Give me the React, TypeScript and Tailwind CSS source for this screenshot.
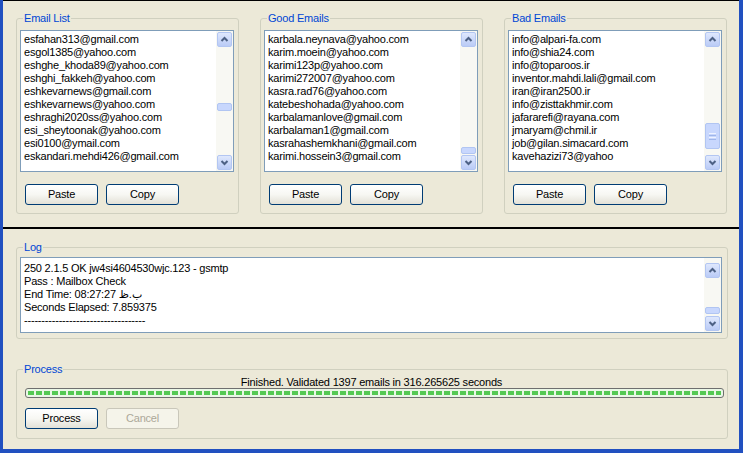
import React from "react";

function Arrow({ up }: { up: boolean }) {
  return (
    <svg width="13" height="13" viewBox="0 0 13 13">
      <path
        d={up ? "M3.5 8 L6.5 5 L9.5 8" : "M3.5 5 L6.5 8 L9.5 5"}
        fill="none"
        stroke="#4d6185"
        strokeWidth="2"
      />
    </svg>
  );
}

function SBtn({ up }: { up: boolean }) {
  return (
    <div className="w-[15px] h-[15px] shrink-0 rounded-[2px] border border-[#b3c6f2] bg-linear-to-b from-[#dfe8fd] to-[#bacbf6] flex items-center justify-center">
      <Arrow up={up} />
    </div>
  );
}

function ScrollBar({ pad, thumb, grip }: { pad: string; thumb: string; grip?: boolean }) {
  return (
    <div className={`w-[17px] shrink-0 flex flex-col items-center bg-[#f8f8f3] ${pad}`}>
      <SBtn up />
      <div className="flex-1 w-full flex flex-col items-center">
        <div
          className={`w-[15px] rounded-[2px] border border-[#b1c5f2] bg-[#c8d7fd] flex flex-col items-center justify-center gap-[1px] ${thumb}`}
        >
          {grip && (
            <>
              <div className="w-[7px] h-[1px] bg-[#eef3ff]" />
              <div className="w-[7px] h-[1px] bg-[#9fb6ea]" />
              <div className="w-[7px] h-[1px] bg-[#eef3ff]" />
              <div className="w-[7px] h-[1px] bg-[#9fb6ea]" />
            </>
          )}
        </div>
      </div>
      <SBtn up={false} />
    </div>
  );
}

function Btn({ children, disabled }: { children: React.ReactNode; disabled?: boolean }) {
  return (
    <button
      type="button"
      className={
        disabled
          ? "w-[73px] h-[21px] border border-[#c9c7ba] rounded-[3px] bg-[#f5f4ea] text-[#aca899] flex items-center justify-center leading-none"
          : "w-[73px] h-[21px] border border-[#003c74] rounded-[3px] bg-linear-to-b from-white via-[#f7f7f3] to-[#e3e1d7] text-black flex items-center justify-center leading-none"
      }
    >
      {children}
    </button>
  );
}

function Group({
  label,
  items,
  thumb,
  grip,
}: {
  label: string;
  items: string[];
  thumb: string;
  grip?: boolean;
}) {
  return (
    <fieldset className="w-[223px] border border-[#d0d0bf] rounded-[3px] pl-[3px] pr-[4px] pt-[5px] pb-[8px]">
      <legend className="ml-[3px] px-[1px] leading-[13px] text-[#0046d5]">{label}</legend>
      <div className="h-[142px] border border-[#7f9db9] bg-white flex">
        <div className="flex-1 pt-[2px] pl-[3px] leading-[13px] whitespace-nowrap overflow-hidden">
          {items.map((i) => (
            <div key={i}>{i}</div>
          ))}
        </div>
        <ScrollBar pad="px-[1px] pt-[1px] pb-[1px]" thumb={thumb} grip={grip} />
      </div>
      <div className="flex gap-[8px] pl-[5px] mt-[12px]">
        <Btn>Paste</Btn>
        <Btn>Copy</Btn>
      </div>
    </fieldset>
  );
}

const emailList = [
  "esfahan313@gmail.com",
  "esgol1385@yahoo.com",
  "eshghe_khoda89@yahoo.com",
  "eshghi_fakkeh@yahoo.com",
  "eshkevarnews@gmail.com",
  "eshkevarnews@yahoo.com",
  "eshraghi2020ss@yahoo.com",
  "esi_sheytoonak@yahoo.com",
  "esi0100@ymail.com",
  "eskandari.mehdi426@gmail.com",
];

const goodEmails = [
  "karbala.neynava@yahoo.com",
  "karim.moein@yahoo.com",
  "karimi123p@yahoo.com",
  "karimi272007@yahoo.com",
  "kasra.rad76@yahoo.com",
  "katebeshohada@yahoo.com",
  "karbalamanlove@gmail.com",
  "karbalaman1@gmail.com",
  "kasrahashemkhani@gmail.com",
  "karimi.hossein3@gmail.com",
];

const badEmails = [
  "info@alpari-fa.com",
  "info@shia24.com",
  "info@toparoos.ir",
  "inventor.mahdi.lali@gmail.com",
  "iran@iran2500.ir",
  "info@zisttakhmir.com",
  "jafararefi@rayana.com",
  "jmaryam@chmil.ir",
  "job@gilan.simacard.com",
  "kavehazizi73@yahoo",
];

const logLines = [
  "250 2.1.5 OK jw4si4604530wjc.123 - gsmtp",
  "Pass : Mailbox Check",
  "End Time: 08:27:27 ب.ظ",
  "Seconds Elapsed: 7.859375",
  "-----------------------------------",
];

export default function App() {
  return (
    <div className="w-[743px] h-[453px] bg-[#ece9d8] border-l-[3px] border-r-[4px] border-b-[4px] border-[#2150c0] flex flex-col text-[11px] tracking-[-0.2px] font-['Liberation_Sans','DejaVu_Sans',sans-serif] text-black overflow-hidden">
      <div className="h-[229px] shrink-0 border-t border-t-black border-b-2 border-b-black pl-[13px] pt-[11px] flex gap-[21px] items-start">
        <Group label="Email List" items={emailList} thumb="mt-[56px] h-[8px]" />
        <Group label="Good Emails" items={goodEmails} thumb="mt-[100px] h-[7px]" />
        <Group label="Bad Emails" items={badEmails} thumb="mt-[76px] h-[26px]" grip />
      </div>
      <div className="flex-1 pl-[13px] pt-[12px] flex flex-col items-start">
        <fieldset className="w-[712px] border border-[#d0d0bf] rounded-[3px] pl-[3px] pr-[5px] pt-[3px] pb-[5px]">
          <legend className="ml-[3px] px-[1px] leading-[13px] text-[#0046d5]">Log</legend>
          <div className="h-[76px] border border-[#7f9db9] bg-white flex">
            <div className="flex-1 pt-[4px] pl-[3px] leading-[13px] whitespace-nowrap overflow-hidden">
              {logLines.map((l) => (
                <div key={l}>{l}</div>
              ))}
            </div>
            <ScrollBar pad="px-[1px] pt-[5px] pb-[1px]" thumb="mt-[29px] h-[7px]" />
          </div>
        </fieldset>
        <fieldset className="mt-[24px] w-[712px] border border-[#d0d0bf] rounded-[3px] pl-[3px] pr-[4px] pt-0 pb-[9px]">
          <legend className="ml-[3px] px-[1px] leading-[13px] text-[#0046d5]">Process</legend>
          <div className="leading-[12px] text-center">
            Finished. Validated 1397 emails in 316.265625 seconds
          </div>
          <div className="mt-[0px] ml-[5px] mr-[-1px] h-[10px] border border-[#6f6f6f] rounded-[3px] bg-[#eaf7e6] p-[2px]">
            <div className="h-full bg-[repeating-linear-gradient(90deg,#55c954_0px,#55c954_6px,transparent_6px,transparent_8px)]" />
          </div>
          <div className="flex gap-[8px] pl-[5px] mt-[10px]">
            <Btn>Process</Btn>
            <Btn disabled>Cancel</Btn>
          </div>
        </fieldset>
      </div>
    </div>
  );
}
